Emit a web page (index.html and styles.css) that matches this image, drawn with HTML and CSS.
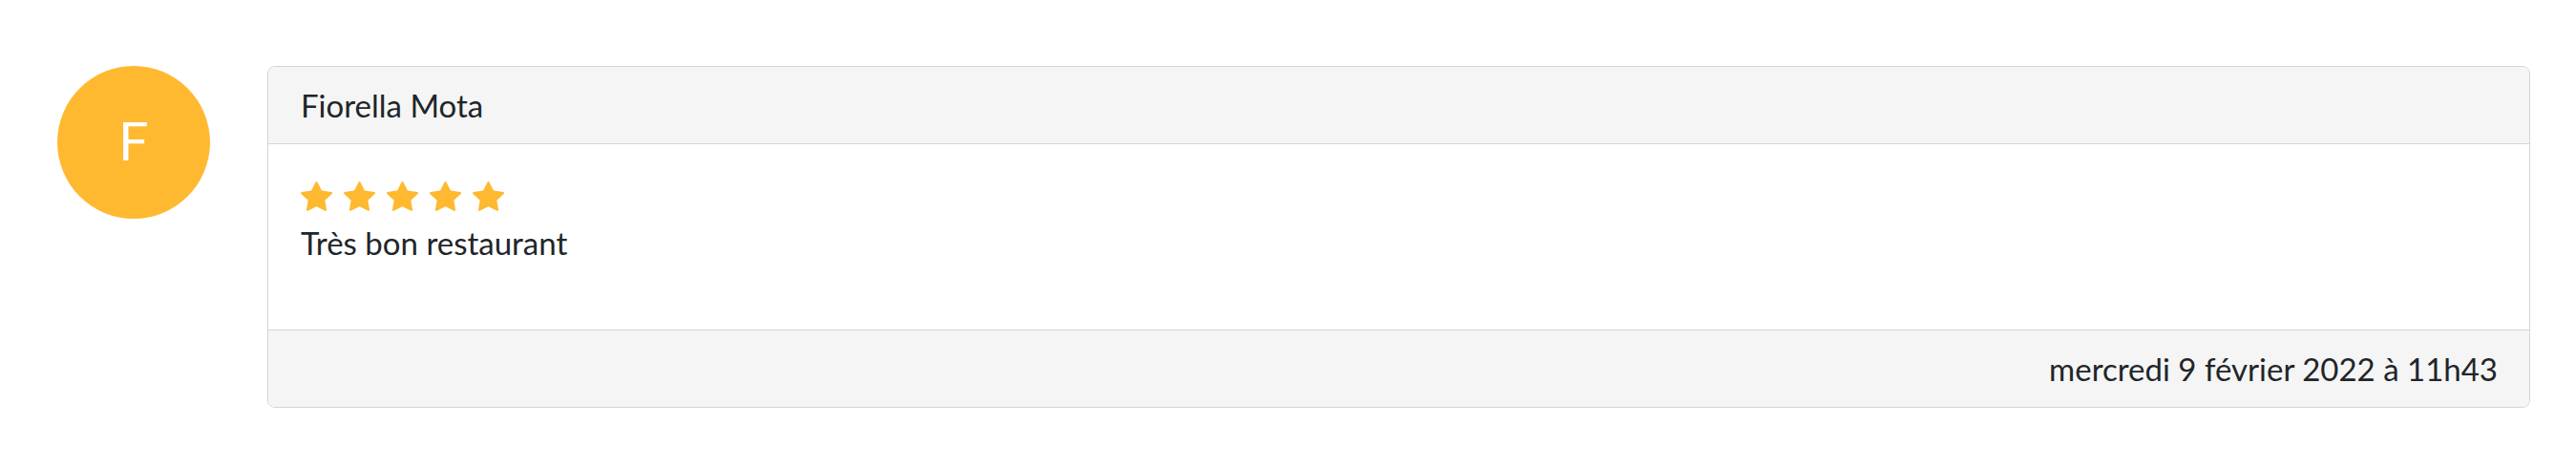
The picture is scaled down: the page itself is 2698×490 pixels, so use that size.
FILE: index.html
```html
<!DOCTYPE html>
<html lang="fr">
<head>
<meta charset="utf-8">
<title>Avis</title>
<link rel="stylesheet" href="styles.css">
</head>
<body>
<div class="review">
  <div class="avatar">F</div>
  <div class="card">
    <div class="card-header">Fiorella Mota</div>
    <div class="card-body">
      <div class="stars">
        <svg class="star" viewBox="0 0 16 16"><path d="M3.612 15.443c-.386.198-.824-.149-.746-.592l.83-4.73L.173 6.765c-.329-.314-.158-.888.283-.95l4.898-.696L7.538.792c.197-.39.73-.39.927 0l2.184 4.327 4.898.696c.441.062.612.636.282.95l-3.522 3.356.83 4.73c.078.443-.36.79-.746.592L8 13.187l-4.389 2.256z"/></svg>
        <svg class="star" viewBox="0 0 16 16"><path d="M3.612 15.443c-.386.198-.824-.149-.746-.592l.83-4.73L.173 6.765c-.329-.314-.158-.888.283-.95l4.898-.696L7.538.792c.197-.39.73-.39.927 0l2.184 4.327 4.898.696c.441.062.612.636.282.95l-3.522 3.356.83 4.73c.078.443-.36.79-.746.592L8 13.187l-4.389 2.256z"/></svg>
        <svg class="star" viewBox="0 0 16 16"><path d="M3.612 15.443c-.386.198-.824-.149-.746-.592l.83-4.73L.173 6.765c-.329-.314-.158-.888.283-.95l4.898-.696L7.538.792c.197-.39.73-.39.927 0l2.184 4.327 4.898.696c.441.062.612.636.282.95l-3.522 3.356.83 4.73c.078.443-.36.79-.746.592L8 13.187l-4.389 2.256z"/></svg>
        <svg class="star" viewBox="0 0 16 16"><path d="M3.612 15.443c-.386.198-.824-.149-.746-.592l.83-4.73L.173 6.765c-.329-.314-.158-.888.283-.95l4.898-.696L7.538.792c.197-.39.73-.39.927 0l2.184 4.327 4.898.696c.441.062.612.636.282.95l-3.522 3.356.83 4.73c.078.443-.36.79-.746.592L8 13.187l-4.389 2.256z"/></svg>
        <svg class="star" viewBox="0 0 16 16"><path d="M3.612 15.443c-.386.198-.824-.149-.746-.592l.83-4.73L.173 6.765c-.329-.314-.158-.888.283-.95l4.898-.696L7.538.792c.197-.39.73-.39.927 0l2.184 4.327 4.898.696c.441.062.612.636.282.95l-3.522 3.356.83 4.73c.078.443-.36.79-.746.592L8 13.187l-4.389 2.256z"/></svg>
      </div>
      <p class="comment">Très bon restaurant</p>
    </div>
    <div class="card-footer">mercredi 9 février 2022 à 11h43</div>
  </div>
</div>
</body>
</html>
```
FILE: styles.css
```css
html, body {
  margin: 0;
  padding: 0;
  background: #ffffff;
}

body {
  font-family: "Lato", "Noto Sans", sans-serif;
  color: #212529;
}

.review {
  display: flex;
  align-items: flex-start;
  gap: 60px;
  padding: 69px 48px 0 60px;
}

.avatar {
  flex: 0 0 160px;
  width: 160px;
  height: 160px;
  border-radius: 50%;
  background: #ffb930;
  color: #ffffff;
  display: flex;
  align-items: center;
  justify-content: center;
  font-family: "Roboto", "Noto Sans", sans-serif;
  font-weight: 400;
  font-size: 56px;
  line-height: 1;
}

.card {
  flex: 1;
  border: 1px solid #d5d5d5;
  border-radius: 8px;
  overflow: hidden;
}

.card-header {
  background: #f5f5f5;
  border-bottom: 1px solid #d5d5d5;
  padding: 16px 34px;
  font-size: 33px;
  line-height: 48px;
}

.card-body {
  padding: 38px 34px 67px;
  background: #ffffff;
}

.stars {
  display: flex;
  gap: 12px;
  height: 33px;
  margin-bottom: 8px;
}

.star {
  width: 33px;
  height: 33px;
  fill: #ffb930;
}

.comment {
  margin: 0;
  font-size: 33px;
  line-height: 48px;
}

.card-footer {
  background: #f5f5f5;
  border-top: 1px solid #d5d5d5;
  padding: 16px 33px;
  text-align: right;
  font-size: 33px;
  line-height: 48px;
}
```
